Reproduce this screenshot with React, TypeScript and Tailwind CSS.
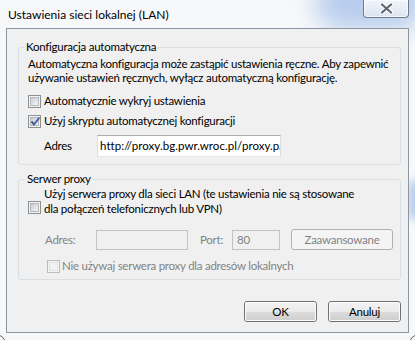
import React from "react";

function Checkbox({ checked, disabled }: { checked?: boolean; disabled?: boolean }) {
  return (
    <span
      className={
        disabled
          ? "relative flex w-[13px] h-[13px] shrink-0 border border-[#bcbcbc] bg-[#f4f4f4] p-[1px]"
          : "relative flex w-[13px] h-[13px] shrink-0 border border-[#8e8f8f] bg-[#f4f4f4] p-[1px]"
      }
    >
      <span
        className={
          disabled
            ? "flex-1 border border-[#e1e1e1] bg-[#f2f2f2]"
            : "flex-1 border border-[#b3b7bd] bg-gradient-to-br from-[#c9ccd2] to-[#f5f5f5]"
        }
      />
      {checked && (
        <svg className="absolute left-[1px] top-[0px]" width="11" height="11" viewBox="0 0 11 11">
          <path d="M1.5 5.5 L4 8.5 L9.5 1.5" fill="none" stroke="#4a5f9c" strokeWidth="2" />
        </svg>
      )}
    </span>
  );
}

function Button({ children, disabled, className }: { children: React.ReactNode; disabled?: boolean; className?: string }) {
  if (disabled) {
    return (
      <div className={"flex items-center justify-center rounded-[3px] border border-[#adb2b5] bg-[#f4f4f4] text-[#838383] " + (className ?? "")}>
        {children}
      </div>
    );
  }
  return (
    <div className={"flex rounded-[3px] border border-[#707070] " + (className ?? "")}>
      <div className="flex flex-1 items-center justify-center rounded-[2px] border border-[#fbfbfb] bg-[linear-gradient(#f2f2f2_0%,#ebebeb_50%,#dddddd_50%,#cfcfcf_100%)] text-black">
        {children}
      </div>
    </div>
  );
}

export default function App() {
  return (
    <div
      className="relative w-[415px] h-[340px] overflow-hidden bg-[#f7f8fa] text-[11.5px] tracking-[-0.25px] text-black"
      style={{ fontFamily: 'Lato, "Noto Sans", sans-serif' }}
    >
      {/* aero glass tint */}
      <div className="absolute left-[315px] top-[-25px] w-[110px] h-[55px] rounded-full bg-[#9dbbe8] opacity-70 blur-[12px]" />
      <div className="absolute left-[408px] top-[180px] w-[14px] h-[40px] rounded-full bg-[#9dbbe8] opacity-70 blur-[4px]" />
      {/* outer window corners */}
      <div className="absolute left-[-8px] bottom-[-8px] w-[13px] h-[13px] rounded-full border border-[#5a5f66]" />
      <div className="absolute right-[-8px] bottom-[-8px] w-[13px] h-[13px] rounded-full border border-[#5a5f66]" />

      <div className="relative flex flex-col">
        {/* title bar */}
        <div className="flex h-[28px] items-start">
          <div className="pl-[8px] pt-[7px] text-[12px] leading-[16px] tracking-normal text-[#000]">Ustawienia sieci lokalnej (LAN)</div>
          <div className="ml-auto mr-[6px] flex h-[18px] w-[46px] items-center justify-center rounded-b-[4px] border border-t-0 border-[#6d7c8d] bg-[linear-gradient(#ffffffcc,#e3e9f0cc)] shadow-[inset_0_0_0_1px_#ffffffaa]">
            <svg width="13" height="11" viewBox="0 0 13 11">
              <path d="M2 1.5 L11 9.5 M11 1.5 L2 9.5" stroke="#ffffff" strokeWidth="4.2" strokeLinecap="round" />
              <path d="M2 1.5 L11 9.5 M11 1.5 L2 9.5" stroke="#5f6670" strokeWidth="2.2" strokeLinecap="round" />
            </svg>
          </div>
        </div>

        {/* client area */}
        <div className="ml-[6px] flex h-[305px] w-[403px] flex-col border border-[#8c96a3] bg-[#f0f0f0]">
          {/* group 1 */}
          <fieldset className="ml-[11px] mt-[10px] h-[126px] w-[383px] rounded-[3px] border border-[#d5dfe5]">
            <legend className="ml-[5px] px-[2px] leading-[16px]">Konfiguracja automatyczna</legend>
            <div className="flex flex-col pl-[9px]">
              <p className="mt-[2px] whitespace-nowrap leading-[14px]">
                Automatyczna konfiguracja może zastąpić ustawienia ręczne. Aby zapewnić
                <br />
                używanie ustawień ręcznych, wyłącz automatyczną konfigurację.
              </p>
              <div className="mt-[8px] flex h-[16px] items-center gap-[3px]">
                <Checkbox />
                <span className="leading-[16px]">Automatycznie wykryj ustawienia</span>
              </div>
              <div className="mt-[4px] flex h-[16px] items-center gap-[3px]">
                <Checkbox checked />
                <span className="leading-[16px]">Użyj skryptu automatycznej konfiguracji</span>
              </div>
              <div className="mt-[6px] flex items-center">
                <span className="w-[69px] pl-[16px] leading-[16px]">Adres</span>
                <div className="flex h-[22px] w-[184px] items-center overflow-hidden whitespace-nowrap border border-[#abadb3] border-x-[#dbdfe6] border-b-[#e3e9ef] bg-white pl-[2px] tracking-[0.05px]">
                  http://proxy.bg.pwr.wroc.pl/proxy.pac
                </div>
              </div>
            </div>
          </fieldset>

          {/* group 2 */}
          <fieldset className="ml-[11px] mt-[6px] h-[109px] w-[383px] rounded-[3px] border border-[#d5dfe5]">
            <legend className="ml-[6px] px-[2px] leading-[16px]">Serwer proxy</legend>
            <div className="flex flex-col pl-[9px]">
              <div className="mt-[-1px] flex items-start gap-[3px]">
                <div className="pt-[15px]">
                  <Checkbox />
                </div>
                <span className="whitespace-nowrap leading-[15px]">
                  Użyj serwera proxy dla sieci LAN (te ustawienia nie są stosowane
                  <br />
                  dla połączeń telefonicznych lub VPN)
                </span>
              </div>
              <div className="mt-[13px] flex items-center text-[#838383]">
                <span className="w-[68px] pl-[17px] leading-[16px]">Adres:</span>
                <div className="h-[20px] w-[92px] border border-[#c3c3c3] bg-[#f0f0f0]" />
                <span className="w-[44px] pl-[12px] leading-[16px]">Port:</span>
                <div className="flex h-[20px] w-[48px] items-center border border-[#c3c3c3] bg-[#f0f0f0] pl-[4px]">80</div>
                <Button disabled className="ml-[11px] h-[21px] w-[102px]">
                  Zaawansowane
                </Button>
              </div>
              <div className="mt-[8px] flex h-[16px] items-center gap-[2px] pl-[19px] text-[#838383]">
                <Checkbox disabled />
                <span className="leading-[16px]">Nie używaj serwera proxy dla adresów lokalnych</span>
              </div>
            </div>
          </fieldset>

          {/* buttons */}
          <div className="mt-[21px] flex justify-end gap-[11px] pr-[7px]">
            <Button className="h-[21px] w-[73px]">OK</Button>
            <Button className="h-[21px] w-[73px]">Anuluj</Button>
          </div>
        </div>
      </div>
    </div>
  );
}
